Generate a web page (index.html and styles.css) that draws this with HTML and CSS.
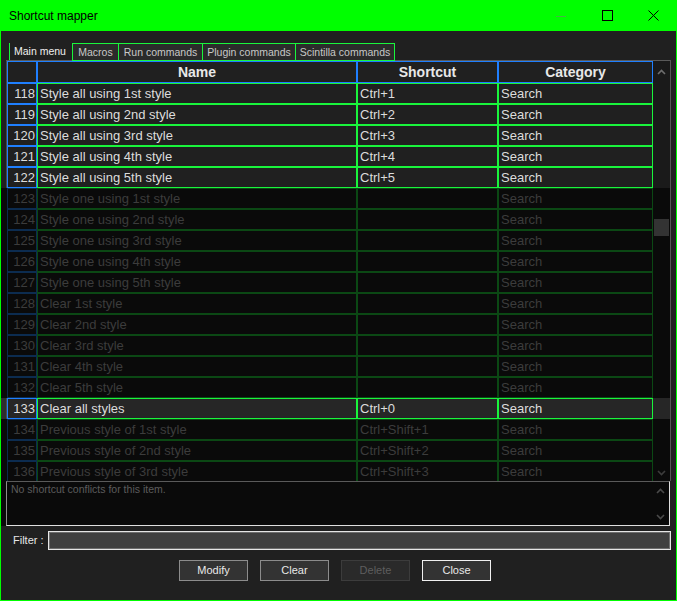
FILE: index.html
```html
<!DOCTYPE html>
<html>
<head>
<meta charset="utf-8">
<title>Shortcut mapper</title>
<link rel="stylesheet" href="styles.css">
</head>
<body>
<div class="window">
  <div class="titlebar">
    <span class="title">Shortcut mapper</span>
    <div class="ctrls">
      <div class="ctrl"><svg width="10" height="10" viewBox="0 0 10 10"><line x1="0" y1="5.5" x2="10" y2="5.5" stroke="#45b545" stroke-width="1"/></svg></div>
      <div class="ctrl"><svg width="11" height="11" viewBox="0 0 11 11"><rect x="0.5" y="0.5" width="10" height="10" fill="none" stroke="#000" stroke-width="1"/></svg></div>
      <div class="ctrl"><svg width="11" height="11" viewBox="0 0 11 11"><path d="M0.5 0.5 L10.5 10.5 M10.5 0.5 L0.5 10.5" fill="none" stroke="#000" stroke-width="1"/></svg></div>
    </div>
  </div>

  <div class="tabs">
    <div class="tab cur">Main menu</div>
    <div class="tab w-mac">Macros</div>
    <div class="tab w-run">Run commands</div>
    <div class="tab w-plg">Plugin commands</div>
    <div class="tab w-sci">Scintilla commands</div>
  </div>

  <div class="list">
    <div class="topline"></div>
    <div class="row hdr">
      <div class="strip"></div>
      <div class="c num"></div>
      <div class="c name">Name</div>
      <div class="c sc">Shortcut</div>
      <div class="c cat">Category</div>
      <div class="sb"></div>
    </div>
    <div class="row on"><div class="strip"></div><div class="c num">118</div><div class="c name">Style all using 1st style</div><div class="c sc">Ctrl+1</div><div class="c cat">Search</div><div class="sb"></div></div>
    <div class="row on"><div class="strip"></div><div class="c num">119</div><div class="c name">Style all using 2nd style</div><div class="c sc">Ctrl+2</div><div class="c cat">Search</div><div class="sb"></div></div>
    <div class="row on"><div class="strip"></div><div class="c num">120</div><div class="c name">Style all using 3rd style</div><div class="c sc">Ctrl+3</div><div class="c cat">Search</div><div class="sb"></div></div>
    <div class="row on"><div class="strip"></div><div class="c num">121</div><div class="c name">Style all using 4th style</div><div class="c sc">Ctrl+4</div><div class="c cat">Search</div><div class="sb"></div></div>
    <div class="row on"><div class="strip"></div><div class="c num">122</div><div class="c name">Style all using 5th style</div><div class="c sc">Ctrl+5</div><div class="c cat">Search</div><div class="sb"></div></div>
    <div class="row off"><div class="strip"></div><div class="c num">123</div><div class="c name">Style one using 1st style</div><div class="c sc"></div><div class="c cat">Search</div><div class="sb"></div></div>
    <div class="row off"><div class="strip"></div><div class="c num">124</div><div class="c name">Style one using 2nd style</div><div class="c sc"></div><div class="c cat">Search</div><div class="sb"></div></div>
    <div class="row off"><div class="strip"></div><div class="c num">125</div><div class="c name">Style one using 3rd style</div><div class="c sc"></div><div class="c cat">Search</div><div class="sb"></div></div>
    <div class="row off"><div class="strip"></div><div class="c num">126</div><div class="c name">Style one using 4th style</div><div class="c sc"></div><div class="c cat">Search</div><div class="sb"></div></div>
    <div class="row off"><div class="strip"></div><div class="c num">127</div><div class="c name">Style one using 5th style</div><div class="c sc"></div><div class="c cat">Search</div><div class="sb"></div></div>
    <div class="row off"><div class="strip"></div><div class="c num">128</div><div class="c name">Clear 1st style</div><div class="c sc"></div><div class="c cat">Search</div><div class="sb"></div></div>
    <div class="row off"><div class="strip"></div><div class="c num">129</div><div class="c name">Clear 2nd style</div><div class="c sc"></div><div class="c cat">Search</div><div class="sb"></div></div>
    <div class="row off"><div class="strip"></div><div class="c num">130</div><div class="c name">Clear 3rd style</div><div class="c sc"></div><div class="c cat">Search</div><div class="sb"></div></div>
    <div class="row off"><div class="strip"></div><div class="c num">131</div><div class="c name">Clear 4th style</div><div class="c sc"></div><div class="c cat">Search</div><div class="sb"></div></div>
    <div class="row off"><div class="strip"></div><div class="c num">132</div><div class="c name">Clear 5th style</div><div class="c sc"></div><div class="c cat">Search</div><div class="sb"></div></div>
    <div class="row on sel"><div class="strip"></div><div class="c num">133</div><div class="c name">Clear all styles</div><div class="c sc">Ctrl+0</div><div class="c cat">Search</div><div class="sb"></div></div>
    <div class="row off"><div class="strip"></div><div class="c num">134</div><div class="c name">Previous style of 1st style</div><div class="c sc">Ctrl+Shift+1</div><div class="c cat">Search</div><div class="sb"></div></div>
    <div class="row off"><div class="strip"></div><div class="c num">135</div><div class="c name">Previous style of 2nd style</div><div class="c sc">Ctrl+Shift+2</div><div class="c cat">Search</div><div class="sb"></div></div>
    <div class="row off"><div class="strip"></div><div class="c num">136</div><div class="c name">Previous style of 3rd style</div><div class="c sc">Ctrl+Shift+3</div><div class="c cat">Search</div><div class="sb"></div></div>

    <div class="vscroll">
      <div class="arrow up"><svg width="9" height="6" viewBox="0 0 9 6"><polyline points="1,5 4.5,1.5 8,5" fill="none" stroke="#6e6e6e" stroke-width="1.6"/></svg></div>
      <div class="thumb"></div>
      <div class="arrow down"><svg width="9" height="6" viewBox="0 0 9 6"><polyline points="1,1 4.5,4.5 8,1" fill="none" stroke="#3c3c3c" stroke-width="1.6"/></svg></div>
    </div>
  </div>

  <div class="cwrap">
    <div class="cstrip"></div>
    <div class="conflict">
      <span class="ctext">No shortcut conflicts for this item.</span>
      <div class="carrow cup"><svg width="9" height="6" viewBox="0 0 9 6"><polyline points="1,5 4.5,1.5 8,5" fill="none" stroke="#4a4a4a" stroke-width="1.6"/></svg></div>
      <div class="carrow cdown"><svg width="9" height="6" viewBox="0 0 9 6"><polyline points="1,1 4.5,4.5 8,1" fill="none" stroke="#4a4a4a" stroke-width="1.6"/></svg></div>
    </div>
  </div>

  <div class="filter">
    <span class="flabel">Filter :</span>
    <div class="finput"></div>
  </div>

  <div class="btns">
    <div class="btn">Modify</div>
    <div class="btn">Clear</div>
    <div class="btn disabled">Delete</div>
    <div class="btn primary">Close</div>
  </div>
</div>
</body>
</html>
```

FILE: styles.css
```css
* { box-sizing: border-box; margin: 0; padding: 0; }
html, body { width: 677px; height: 601px; overflow: hidden; background: #202020; }
body { font-family: "Liberation Sans", Arial, sans-serif; }

.window {
  width: 677px; height: 601px;
  border: 1px solid #00ff00; border-top: 0;
  background: #202020;
  display: flex; flex-direction: column;
}

/* title bar */
.titlebar {
  height: 31px; flex: none;
  background: #00ff00;
  display: flex; align-items: center;
  padding-left: 8px;
}
.title { font-size: 12px; color: #000; line-height: 14px; margin-top: 1px; }
.ctrls { margin-left: auto; display: flex; height: 31px; }
.ctrl { width: 46px; height: 31px; display: flex; align-items: center; justify-content: center; }
.ctrl svg { display: block; }

/* tabs */
.tabs {
  display: flex; height: 17px; flex: none;
  margin: 12px 0 0 8px;
  position: relative; z-index: 1;
}
.tab {
  height: 18px; line-height: 16px;
  font-size: 10.5px; color: #c8c8c8;
  text-align: center; white-space: nowrap;
  border: 1px solid #19f53c;
  background: #2b2b2b;
  margin-left: -1px;
}
.tab.cur {
  width: 63px; height: 17px; margin-left: 0;
  border: 0; border-left: 1px solid #19f53c;
  background: #202020; color: #f0f0f0;
  text-align: left; padding-left: 4px; line-height: 17px;
}
.w-mac { width: 47px; margin-left: 0; }
.w-run { width: 85px; }
.w-plg { width: 94px; }
.w-sci { width: 100px; }

/* list */
.list {
  position: relative; flex: none;
  height: 421px; margin-right: 5px;
  overflow: hidden;
  border-right: 1px solid #555;
  display: flex; flex-direction: column;
}
.topline { height: 1px; margin-left: 5px; background: #5a5a5a; flex: none; }
.row { display: flex; height: 21px; flex: none; }
.row.hdr { height: 22px; }
.strip { width: 6px; border-right: 1px solid #4a4a4a; background: #202020; }
.c {
  height: 100%;
  border: 1px solid #19f53c;
  font-size: 13px; line-height: 19px;
  padding-left: 2px;
  white-space: nowrap; overflow: hidden;
  color: #dcdcdc;
}
.num { width: 30px; text-align: right; padding: 0 1px 0 0; border-color: #1f7fff; }
.name { width: 320px; }
.sc { width: 141px; }
.cat { width: 155px; }
.sb { width: 17px; background: #1a1a1a; }

.hdr .c {
  border-color: #1f7fff; background: #202020;
  font-weight: bold; font-size: 14px; line-height: 20px;
  text-align: center; padding: 0; color: #e8e8e8;
}
.on .c { background: #202020; }
.on.sel .c { background: #262626; }
.on.sel .strip { background: #2e2e2e; }
.on.sel .sb { background: #262626; }
.off .c { background: #0a0a0a; border-color: #0b4814; color: #3c3c3c; }
.off .num { border-color: #0c2c50; }
.off .strip { background: #0a0a0a; border-right-color: #0a0a0a; }
.off .sb { background: #0a0a0a; }

.vscroll { position: absolute; top: 1px; right: 0; bottom: 0; width: 17px; }
.arrow { position: absolute; left: 0; width: 17px; height: 17px; display: flex; align-items: center; justify-content: center; }
.arrow.up { top: 2px; }
.arrow.down { bottom: 0; }
.arrow svg, .carrow svg { display: block; }
.thumb { position: absolute; top: 158px; left: 1px; width: 15px; height: 17px; background: #333; }

/* conflicts box */
.cwrap { display: flex; height: 45px; flex: none; }
.cstrip { width: 5px; background: #0a0a0a; }
.conflict {
  width: 664px; position: relative;
  background: #0a0a0a;
  border-top: 1px solid #5a5a5a;
  border-left: 1px solid #8c8c8c;
  border-right: 1px solid #e0e0e0;
  border-bottom: 1px solid #e0e0e0;
  padding: 1px 0 0 4px;
}
.ctext { display: block; font-size: 10.5px; line-height: 13px; color: #5c5c5c; }
.carrow { position: absolute; right: 1px; width: 15px; height: 12px; display: flex; align-items: center; justify-content: center; }
.cup { top: 3px; }
.cdown { bottom: 2px; }

/* filter */
.filter { display: flex; align-items: center; height: 19px; margin-top: 5px; padding-left: 12px; flex: none; }
.flabel { font-size: 11px; color: #e6e6e6; white-space: nowrap; margin-top: -2px; }
.finput {
  margin-left: auto; margin-right: 5px;
  width: 623px; height: 19px;
  background: #404040;
  border: 1px solid #e6e6e6;
  box-shadow: inset 0 0 0 1px #6e6e6e;
}

/* buttons */
.btns { display: flex; gap: 12px; margin-top: 10px; padding-left: 178px; flex: none; }
.btn {
  width: 69px; height: 21px;
  background: #333;
  border: 1px solid #8c8c8c;
  color: #e8e8e8; font-size: 11px; line-height: 19px;
  text-align: center;
}
.btn.disabled { background: #2a2a2a; border-color: #3c3c3c; color: #5e5e5e; }
.btn.primary { border-color: #f0f0f0; }
```
